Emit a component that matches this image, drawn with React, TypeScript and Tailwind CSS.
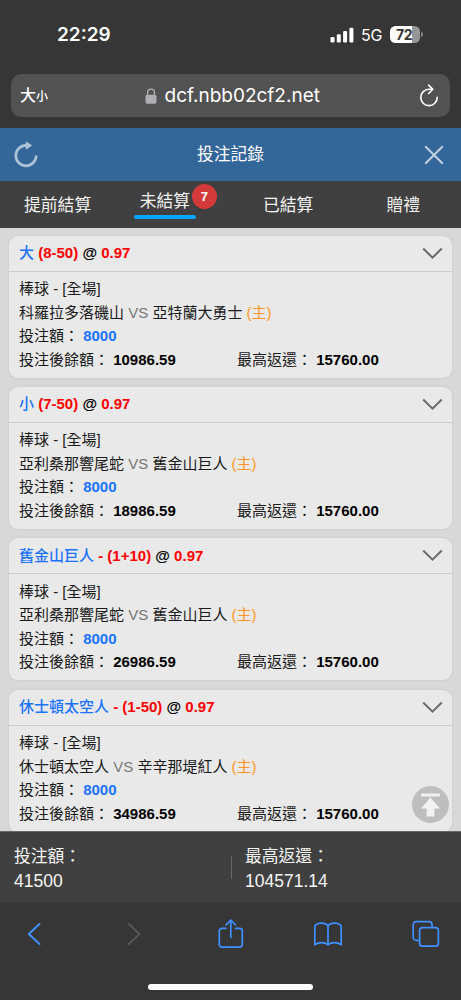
import React from 'react';

interface Bet {
  pick: string;
  line: string;
  away: string;
  home: string;
  balance: string;
}

const bets: Bet[] = [
  { pick: '大', line: '(8-50)', away: '科羅拉多落磯山', home: '亞特蘭大勇士', balance: '10986.59' },
  { pick: '小', line: '(7-50)', away: '亞利桑那響尾蛇', home: '舊金山巨人', balance: '18986.59' },
  { pick: '舊金山巨人', line: '- (1+10)', away: '亞利桑那響尾蛇', home: '舊金山巨人', balance: '26986.59' },
  { pick: '休士頓太空人', line: '- (1-50)', away: '休士頓太空人', home: '辛辛那堤紅人', balance: '34986.59' },
];

const StatusBar = () => (
  <div className="flex h-[74px] items-center justify-between pr-[38px] pl-[57px] pb-[5px] text-white">
    <span className="font-['Inter'] text-[19px] leading-none font-semibold">22:29</span>
    <div className="flex items-center">
      <svg width="24" height="16" viewBox="0 0 24 16" fill="currentColor">
        <rect x="0.5" y="10" width="4" height="5.5" rx="1.2" />
        <rect x="6.8" y="7.2" width="4" height="8.3" rx="1.2" />
        <rect x="13.1" y="4" width="4" height="11.5" rx="1.2" />
        <rect x="19.4" y="0.8" width="4" height="14.7" rx="1.2" />
      </svg>
      <span className="ml-[7px] w-[22px] font-['Inter'] text-[16px] leading-none tracking-[-0.3px]">5G</span>
      <div className="ml-[7px] flex h-[17px] w-[30px] items-center justify-center rounded-[5.5px] bg-linear-to-r from-white from-72% to-[#969696] to-72% pr-[2px] font-['Inter'] text-[14px] leading-none font-bold tracking-[-0.4px] text-[#363636]">
        72
      </div>
      <div className="ml-px h-[5px] w-[2px] rounded-r-full bg-[#858585]" />
    </div>
  </div>
);

const AddressBar = () => (
  <div className="mx-[11px] flex h-[43px] items-center justify-between rounded-[10px] bg-[#525252] pr-[11px] pl-[9px] text-white">
    <div className="flex w-[40px] items-baseline leading-none font-medium">
      <span className="text-[16px]">大</span>
      <span className="text-[12px]">小</span>
    </div>
    <div className="flex items-center pl-[5px]">
      <svg className="mr-[8px]" width="12" height="16" viewBox="0 0 12 16">
        <path d="M2.6 8V4.5a3.4 3.4 0 0 1 6.8 0V8" fill="none" stroke="#aeaeb3" strokeWidth="1.4" />
        <rect x="0.5" y="6.7" width="11" height="9" rx="1.6" fill="#aeaeb3" />
      </svg>
      <span className="w-[155px] font-['Inter'] text-[19px] leading-none whitespace-nowrap">dcf.nbb02cf2.net</span>
    </div>
    <div className="flex w-[40px] justify-end">
      <svg width="20" height="24" viewBox="0 0 20 24" fill="none" stroke="currentColor" strokeWidth="1.6" strokeLinecap="round" strokeLinejoin="round">
        <path d="M13.2 5.2H10A8.2 8.2 0 1 0 18.2 13.4" />
        <path d="M9.6 1.1l4.2 4.2-4.2 4.2" />
      </svg>
    </div>
  </div>
);

const TitleBar = () => (
  <div className="mt-[11px] flex h-[53px] items-center justify-between bg-[#336699] pr-[17px] pl-[14px]">
    <svg width="24" height="28" viewBox="0 0 24 28">
      <path d="M13 4.4h-1A10.2 10.2 0 1 0 22.2 14.6" fill="none" stroke="#adc2d6" strokeWidth="2.7" />
      <path d="M11.8 0.2l6.4 4.4-6.4 4.2z" fill="#adc2d6" />
    </svg>
    <span className="pr-[1px] text-[16.8px] text-white">投注記錄</span>
    <svg width="20" height="20" viewBox="0 0 20 20" stroke="#c2d1e0" strokeWidth="2">
      <path d="M1.2 1.2l17.6 17.6M18.8 1.2L1.2 18.8" />
    </svg>
  </div>
);

const Tabs = () => (
  <div className="grid h-[47px] grid-cols-4 items-center bg-[#404040] text-center text-[16.8px] text-[#f2f2f2]">
    <div className="pt-[3px]">提前結算</div>
    <div className="relative h-full w-[62px] justify-self-center mr-[16px]">
      <div className="pt-[8px] leading-[25px]">未結算</div>
      <div className="mt-[1px] h-[4px] rounded-full bg-[#00a8ff]" />
      <span className="absolute top-[3px] left-[58px] flex h-[25px] w-[25px] items-center justify-center rounded-full bg-[#d43a3a] text-[13px] font-bold text-white">
        7
      </span>
    </div>
    <div className="pt-[3px]">已結算</div>
    <div className="pt-[3px]">贈禮</div>
  </div>
);

const BetCard: React.FC<{ bet: Bet }> = ({ bet }) => (
  <div className="h-[142px] shrink-0 rounded-[9px] bg-[#e9e9e9] text-[15px] text-[#1a1a1a] shadow-[0_0_3px_rgba(0,0,0,0.08)]">
    <div className="flex h-[36px] items-center justify-between border-b border-[#cccccc] pr-[9px] pl-[10px]">
      <div className="font-bold text-[#ff0000]">
        <span className="font-medium text-[#1a73ff]">{bet.pick}</span> {bet.line}{' '}
        <span className="text-black">@</span> 0.97
      </div>
      <svg width="21" height="13" viewBox="0 0 21 13" fill="none" stroke="#6b6b6b" strokeWidth="2">
        <path d="M1.2 1.5l9.3 9.2 9.3-9.2" />
      </svg>
    </div>
    <div className="px-[10px] pt-[5.5px] leading-[23.5px]">
      <p>棒球 - [全場]</p>
      <p>
        {bet.away} <span className="text-[#777777]">VS</span> {bet.home} <span className="text-[#ff9420]">(主)</span>
      </p>
      <p>
        投注額： <b className="text-[#1a73ff]">8000</b>
      </p>
      <div className="grid grid-cols-[218px_1fr]">
        <span>
          投注後餘額： <b className="text-black">{bet.balance}</b>
        </span>
        <span>
          最高返還： <b className="text-black">15760.00</b>
        </span>
      </div>
    </div>
  </div>
);

const Summary = () => (
  <div className="flex h-[71px] items-center border-t border-[#666666] bg-[#404040] pt-[4px] text-[16.8px] leading-[24px] text-[#f5f5f5]">
    <div className="w-[231px] pl-[14px]">
      <p>投注額：</p>
      <p className="text-[17.5px]">41500</p>
    </div>
    <div className="mb-[4px] h-[23px] w-px bg-[#666666]" />
    <div className="pl-[13px]">
      <p>最高返還：</p>
      <p className="text-[17.5px]">104571.14</p>
    </div>
  </div>
);

const BrowserToolbar = () => (
  <div className="flex h-[63px] items-center pt-[1px] pl-[27px] text-[#4090ff]">
    <svg width="14" height="24" viewBox="0 0 14 24" fill="none" stroke="currentColor" strokeWidth="2" strokeLinecap="round" strokeLinejoin="round">
      <path d="M12.5 2L1.8 12l10.7 10" />
    </svg>
    <svg className="ml-[86px]" width="14" height="24" viewBox="0 0 14 24" fill="none" stroke="#585858" strokeWidth="1.8" strokeLinecap="round" strokeLinejoin="round">
      <path d="M1.8 2l10.7 10L1.8 22" />
    </svg>
    <svg className="ml-[76px]" width="28" height="32" viewBox="0 0 28 32" fill="none" stroke="currentColor" strokeWidth="1.7" strokeLinecap="round" strokeLinejoin="round">
      <path d="M9 10.3H4.9a2.6 2.6 0 0 0-2.6 2.6v13.7a2.6 2.6 0 0 0 2.6 2.6h17.8a2.6 2.6 0 0 0 2.6-2.6V12.9a2.6 2.6 0 0 0-2.6-2.6H18.6" />
      <path d="M13.8 19.5V2.5M9 7l4.8-4.8L18.6 7" />
    </svg>
    <svg className="ml-[68px]" width="30" height="26" viewBox="0 0 30 26" fill="none" stroke="currentColor" strokeWidth="1.7" strokeLinejoin="round">
      <path d="M15 4.6C12.2 1.2 4.6 1.2 1.8 4.8v19c3.6-2.8 9.9-2.8 13.2 0 3.3-2.8 9.6-2.8 13.2 0v-19C25.4 1.2 17.8 1.2 15 4.6z" />
      <path d="M15 4.6v19.2" />
    </svg>
    <svg className="ml-[69px]" width="28" height="28" viewBox="0 0 28 28" fill="none" stroke="currentColor" strokeWidth="1.7" strokeLinejoin="round">
      <path d="M7.5 20.4H4.2A3 3 0 0 1 1.2 17.4V4.6a3 3 0 0 1 3-3h12.8a3 3 0 0 1 3 3v2.9" />
      <rect x="7.6" y="7.6" width="18.8" height="18.6" rx="3" />
    </svg>
  </div>
);

export default function App() {
  return (
    <div className="flex h-[1000px] w-[461px] flex-col overflow-hidden bg-[#363636] font-['Liberation_Sans','Noto_Sans_CJK_TC',sans-serif]">
      <StatusBar />
      <AddressBar />
      <TitleBar />
      <Tabs />
      <div className="relative h-[603px] overflow-hidden bg-[#d8d8d8]">
        <div className="flex flex-col gap-[9.4px] px-[9px] pt-[7.5px]">
          {bets.map((bet) => (
            <BetCard key={bet.balance} bet={bet} />
          ))}
        </div>
        <button className="absolute right-[12px] bottom-[8px] flex h-[37px] w-[37px] items-center justify-center rounded-full bg-[#bebebe]">
          <svg width="21" height="24" viewBox="0 0 21 24" fill="#f2f2f2">
            <rect x="1" y="0.5" width="19" height="3" rx="1" />
            <path d="M10.5 4.6L20 15.5h-5.6v8H6.6v-8H1z" />
          </svg>
        </button>
      </div>
      <Summary />
      <BrowserToolbar />
      <div className="mx-auto mt-[19px] h-[6px] w-[165px] rounded-full bg-white" />
    </div>
  );
}
